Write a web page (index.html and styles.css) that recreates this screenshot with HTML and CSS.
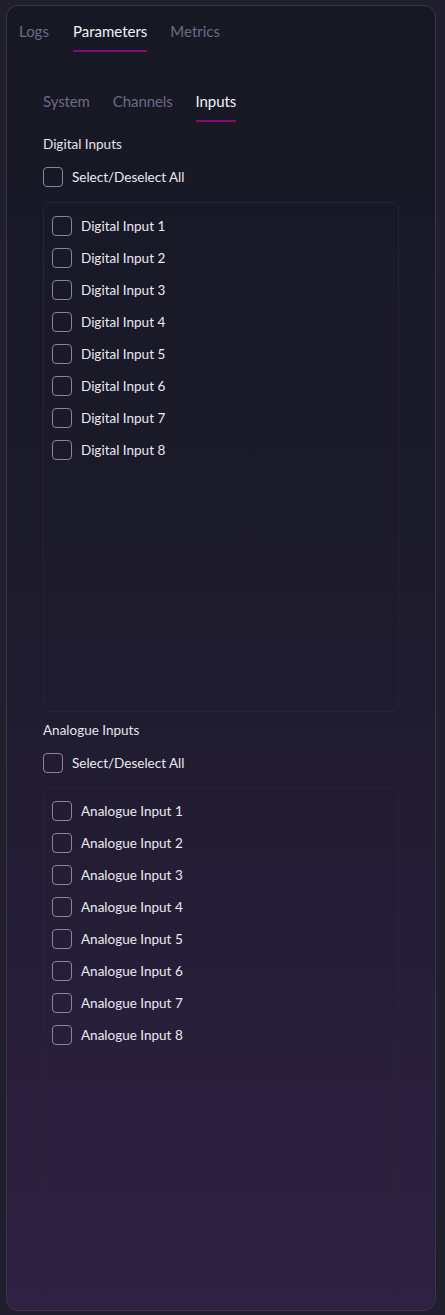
FILE: index.html
```html
<!DOCTYPE html>
<html>
<head>
<meta charset="utf-8">
<link rel="stylesheet" href="styles.css">
</head>
<body>
<div class="card">
  <nav class="tabs">
    <span class="tab">Logs</span>
    <span class="tab active">Parameters</span>
    <span class="tab">Metrics</span>
  </nav>
  <div class="content">
    <nav class="subtabs">
      <span class="subtab">System</span>
      <span class="subtab">Channels</span>
      <span class="subtab active">Inputs</span>
    </nav>

    <section class="group">
      <div class="group-title">Digital Inputs</div>
      <label class="check all"><span class="box"></span>Select/Deselect All</label>
      <div class="list">
        <label class="check"><span class="box"></span>Digital Input 1</label>
        <label class="check"><span class="box"></span>Digital Input 2</label>
        <label class="check"><span class="box"></span>Digital Input 3</label>
        <label class="check"><span class="box"></span>Digital Input 4</label>
        <label class="check"><span class="box"></span>Digital Input 5</label>
        <label class="check"><span class="box"></span>Digital Input 6</label>
        <label class="check"><span class="box"></span>Digital Input 7</label>
        <label class="check"><span class="box"></span>Digital Input 8</label>
      </div>
    </section>

    <section class="group second">
      <div class="group-title">Analogue Inputs</div>
      <label class="check all"><span class="box"></span>Select/Deselect All</label>
      <div class="list faint">
        <label class="check"><span class="box"></span>Analogue Input 1</label>
        <label class="check"><span class="box"></span>Analogue Input 2</label>
        <label class="check"><span class="box"></span>Analogue Input 3</label>
        <label class="check"><span class="box"></span>Analogue Input 4</label>
        <label class="check"><span class="box"></span>Analogue Input 5</label>
        <label class="check"><span class="box"></span>Analogue Input 6</label>
        <label class="check"><span class="box"></span>Analogue Input 7</label>
        <label class="check"><span class="box"></span>Analogue Input 8</label>
      </div>
    </section>
  </div>
</div>
</body>
</html>
```
FILE: styles.css
```css
html, body {
  margin: 0;
  padding: 0;
  background: #211f2d;
}
body {
  padding: 5px 9px 4px 6px;
  font-family: Lato, "Noto Sans", sans-serif;
  color: #ece9f2;
}
.card {
  box-sizing: border-box;
  height: 1306px;
  border: 1px solid #3b3549;
  border-radius: 12px;
  background: linear-gradient(180deg, #161823 0%, #1b1a2a 40%, #2f2143 100%);
  overflow: hidden;
}
.tabs {
  display: flex;
  gap: 23px;
  padding: 15px 0 0 12px;
  height: 31px;
}
.tab {
  font-size: 15px;
  line-height: 20px;
  color: #6f6a86;
  height: 31px;
}
.tab.active {
  color: #f2f0f6;
  border-bottom: 2px solid #860b78;
  box-sizing: border-box;
  margin-left: 1px;
}
.content {
  padding: 39px 36px 0 36px;
}
.subtabs {
  display: flex;
  gap: 23px;
  height: 31px;
}
.subtab {
  font-size: 15px;
  line-height: 20px;
  color: #6f6a86;
  box-sizing: border-box;
  height: 31px;
  letter-spacing: -0.1px;
}
.subtab.active {
  color: #f2f0f6;
  border-bottom: 2px solid #860b78;
}
.group {
  display: flex;
  flex-direction: column;
}
.group-title {
  font-size: 13.5px;
  line-height: 18px;
  margin-top: 13px;
  color: #e6e3ee;
}
.group.second .group-title {
  margin-top: 9px;
}
.check {
  display: flex;
  align-items: center;
  gap: 9px;
  font-size: 13.5px;
  line-height: 20px;
  color: #ece9f2;
  height: 20px;
}
.check.all {
  margin-top: 14px;
}
.box {
  box-sizing: border-box;
  width: 20px;
  height: 20px;
  border: 1.5px solid #8b8499;
  border-radius: 4px;
  flex: none;
}
.list {
  margin-top: 15px;
  height: 510px;
  box-sizing: border-box;
  border: 1px solid #272336;
  border-radius: 8px;
  padding: 13px 8px;
  display: flex;
  flex-direction: column;
  gap: 12px;
}
.list.faint {
  margin-top: 14px;
  border-color: #2a2339;
  border-bottom-color: transparent;
}
```
